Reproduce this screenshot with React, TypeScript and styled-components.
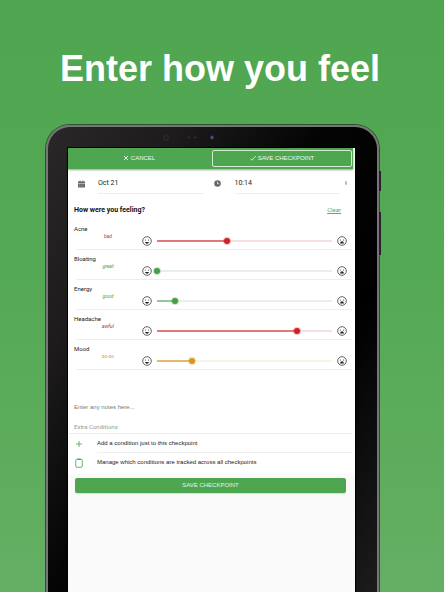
import React, { useState } from "react";
import styled, { createGlobalStyle } from "styled-components";

const Global = createGlobalStyle`
  *, *::before, *::after { box-sizing: border-box; }
  body { margin: 0; font-family: Roboto, "Liberation Sans", sans-serif; color: #222; }
  button, input, textarea { font: inherit; color: inherit; margin: 0; }
`;

const wide = `"Liberation Sans", Arial, sans-serif`;

const Page = styled.main`
  min-height: 100vh;
  display: flex;
  flex-direction: column;
  padding: 0 65px 0 46px;
  background: linear-gradient(#50a550 0%, #54a954 45%, #64af64 100%);
`;

const Header = styled.header`
  display: flex;
  justify-content: center;
  margin-right: -15px;
  padding-top: 49px;
`;

const Headline = styled.h1`
  margin: 0;
  font: bold 36px/40px ${wide};
  white-space: nowrap;
  color: #fff;
`;

const Tablet = styled.section`
  position: relative;
  flex: 1;
  display: flex;
  flex-direction: column;
  margin-top: 36px;
  padding: 0 22px 0 20px;
  border: 2px solid #77747a;
  border-bottom: 0;
  border-radius: 24px 24px 0 0;
  background: linear-gradient(120deg, #292728 0%, #1d1b1c 22%, #050505 45%, #000 70%, #1c1c1c 100%);
  box-shadow: 0 0 0 1px #285228;
`;

const SideButton = styled.span<{ $top: number; $height: number }>`
  position: absolute;
  right: -4px;
  top: ${(p) => p.$top}px;
  width: 2px;
  height: ${(p) => p.$height}px;
  background: #272129;
`;

const CameraBar = styled.div`
  height: 21px;
  display: flex;
  justify-content: center;
  align-items: center;
`;

const Screen = styled.div`
  flex: 1;
  display: flex;
  flex-direction: column;
  background: #fafafa;
  box-shadow: 0 0 0 1px #000;
`;

const Sheet = styled.div`
  background: #fff;
  padding-bottom: 2px;
`;

const TopBar = styled.div`
  display: grid;
  grid-template-columns: 1fr 1fr;
  height: 21px;
  margin-right: 2px;
  padding: 2px 1px 2px 0;
  background: #4ea650;
  box-shadow: 0 1px 2px #0006;
`;

const BarButton = styled.button<{ $outlined?: boolean }>`
  display: flex;
  align-items: center;
  justify-content: center;
  gap: 2px;
  padding: 0 0 1px;
  border: ${(p) => (p.$outlined ? "1px solid #d5ecd4" : "0")};
  border-radius: 2px;
  background: none;
  color: #eef8ee;
  font-family: ${wide};
  font-size: 6px;
  line-height: 8px;
  margin-left: ${(p) => (p.$outlined ? "2px" : "0")};
`;

const WhenRow = styled.div`
  display: grid;
  grid-template-columns: 30px 1fr 31px 1fr;
  align-items: center;
  padding: 4px 15px 0 0;
  color: #666;
`;

const IconCell = styled.label`
  display: flex;
  padding-left: 10px;
`;

const WhenField = styled.div`
  position: relative;
  display: flex;
  align-items: center;
  border-bottom: 1px solid #eee;
`;

const WhenInput = styled.input`
  flex: 1;
  min-width: 0;
  height: 20px;
  border: 0;
  padding: 0;
  background: none;
  outline: none;
  color: #222;
  font-size: 7px;
`;

const Caret = styled.span`
  position: absolute;
  right: -7px;
  width: 2px;
  height: 4px;
  border-radius: 1px;
  background: #bbb;
`;

const SectionHead = styled.div`
  display: flex;
  align-items: center;
  justify-content: space-between;
  padding: 11px 14px 5px 6px;
`;

const SectionTitle = styled.h2`
  margin: 0;
  font-size: 7px;
  line-height: 10px;
  font-weight: 700;
  color: #111;
`;

const ClearLink = styled.a`
  font-size: 6px;
  line-height: 10px;
  color: #5cae5e;
`;

const Condition = styled.div`
  display: grid;
  grid-template-columns: 66px 10px 1fr 10px;
  height: 30px;
  margin: 0 3px 0 8px;
  padding-right: 5px;
  border-bottom: 1px solid #eee;
`;

const Caption = styled.div`
  display: flex;
  flex-direction: column;
  margin-left: -2px;
  padding-top: 5px;
`;

const ConditionName = styled.label`
  font-size: 6px;
  line-height: 8px;
`;

const Rating = styled.output<{ $color: string }>`
  width: 68px;
  font-size: 5px;
  line-height: 7px;
  font-style: italic;
  text-align: center;
  color: ${(p) => p.$color};
`;

const FaceCell = styled.span`
  display: flex;
  padding-top: 16px;
`;

const Slider = styled.input<{ $color: string; $track: string; $fill: string }>`
  appearance: none;
  width: auto;
  min-width: 0;
  height: 8px;
  margin: 17px 2px 0;
  background: none;
  outline: none;
  &::-webkit-slider-runnable-track {
    height: 2px;
    background:
      linear-gradient(${(p) => p.$fill}, ${(p) => p.$fill}) 3px 0 / calc((100% - 6px) * var(--fill)) 100% no-repeat,
      linear-gradient(${(p) => p.$track}, ${(p) => p.$track}) 3px 0 / calc(100% - 6px) 100% no-repeat;
  }
  &::-webkit-slider-thumb {
    appearance: none;
    width: 6px;
    height: 6px;
    margin-top: -2px;
    border-radius: 50%;
    background: ${(p) => p.$color};
    box-shadow: 0 0 0 1px ${(p) => p.$color}44;
  }
`;

const Notes = styled.textarea`
  display: block;
  width: 100%;
  height: 53px;
  padding: 33px 6px 0 6px;
  border: 0;
  outline: none;
  resize: none;
  overflow: hidden;
  background: none;
  font-family: ${wide};
  font-size: 6px;
  line-height: 8px;
  &::placeholder { color: #777; }
`;

const ExtraTitle = styled.h3`
  margin: 0 3px 0 0;
  padding: 0 0 2px 6px;
  border-bottom: 1px solid #eee;
  font-size: 6px;
  line-height: 8px;
  font-weight: 400;
  color: #999;
`;

const Action = styled.button`
  display: grid;
  grid-template-columns: 22px 1fr;
  align-items: center;
  width: 100%;
  padding: 0 3px 0 7px;
  border: 0;
  background: none;
  text-align: left;
  color: #57ab62;
`;

const ActionText = styled.span<{ $last?: boolean }>`
  height: 19px;
  border-bottom: 1px solid ${(p) => (p.$last ? "transparent" : "#eee")};
  font-family: ${wide};
  font-size: 6px;
  line-height: 19px;
  color: #222;
`;

const SaveButton = styled.button`
  height: 15px;
  margin: 4px 9px 0 7px;
  padding: 0;
  border: 0;
  border-radius: 2px;
  background: #4ea650;
  box-shadow: 0 1px 1px #0002;
  color: #e6f5e5;
  font-family: ${wide};
  font-size: 6px;
  line-height: 15px;
`;

const Face = ({ sad = false }: { sad?: boolean }) => (
  <svg width="10" height="10" viewBox="0 0 20 20" fill="none" stroke="#444" strokeWidth="1.7" aria-hidden="true">
    <circle cx="10" cy="10" r="8.6" />
    <circle cx="6.9" cy="8" r="1.2" fill="#444" stroke="none" />
    <circle cx="13.1" cy="8" r="1.2" fill="#444" stroke="none" />
    {sad ? (
      <path d="M6 14.8Q7 10.6 10 10.6T14 14.8Z" fill="#222" stroke="none" />
    ) : (
      <path d="M6 12h8Q13 15.4 10 15.4T6 12Z" fill="#222" stroke="none" />
    )}
  </svg>
);

const Camera = () => (
  <svg width="100" height="10" viewBox="0 0 100 10" aria-hidden="true">
    <circle cx="4" cy="5" r="2.4" fill="none" stroke="#343235" strokeWidth=".8" />
    <circle cx="27" cy="4.5" r="1" fill="#39363b" />
    <circle cx="33" cy="4.5" r="1" fill="#39363b" />
    <circle cx="50" cy="4.5" r="2.3" fill="#24233c" />
    <circle cx="50" cy="4.5" r="1.2" fill="#605a9c" />
  </svg>
);

const palette = {
  red: { color: "#cf2027", fill: "#e4777a", track: "#f9e0e0" },
  green: { color: "#43a047", fill: "#93c995", track: "#e8efe8" },
  amber: { color: "#d8951f", fill: "#e4b96e", track: "#f9f3e4" },
};

type Tone = keyof typeof palette;

const conditions: { name: string; rating: string; value: number; tone: Tone }[] = [
  { name: "Acne", rating: "bad", value: 40, tone: "red" },
  { name: "Bloating", rating: "great", value: 0, tone: "green" },
  { name: "Energy", rating: "good", value: 10, tone: "green" },
  { name: "Headache", rating: "awful", value: 80, tone: "red" },
  { name: "Mood", rating: "so-so", value: 20, tone: "amber" },
];

function ConditionRow({ name, rating, value: initial, tone }: (typeof conditions)[number]) {
  const [value, setValue] = useState(initial);
  const p = palette[tone];
  const id = `condition-${name.toLowerCase()}`;
  return (
    <Condition>
      <Caption>
        <ConditionName htmlFor={id}>{name}</ConditionName>
        <Rating htmlFor={id} $color={p.color}>{rating}</Rating>
      </Caption>
      <FaceCell><Face /></FaceCell>
      <Slider
        id={id}
        type="range"
        min={0}
        max={100}
        value={value}
        onChange={(e) => setValue(Number(e.target.value))}
        $color={p.color}
        $fill={p.fill}
        $track={p.track}
        style={{ "--fill": value / 100 } as React.CSSProperties}
      />
      <FaceCell><Face sad /></FaceCell>
    </Condition>
  );
}

export default function App() {
  return (
    <Page>
      <Global />
      <Header>
        <Headline>Enter how you feel</Headline>
      </Header>
      <Tablet>
        <SideButton $top={44} $height={20} />
        <SideButton $top={85} $height={43} />
        <CameraBar><Camera /></CameraBar>
        <Screen>
          <Sheet>
            <TopBar>
              <BarButton type="button">
                <svg width="6" height="6" viewBox="0 0 12 12" stroke="currentColor" strokeWidth="1.8" aria-hidden="true">
                  <path d="M2 2l8 8M10 2l-8 8" />
                </svg>
                CANCEL
              </BarButton>
              <BarButton type="button" $outlined>
                <svg width="6" height="6" viewBox="0 0 12 12" fill="none" stroke="currentColor" strokeWidth="1.6" aria-hidden="true">
                  <path d="M0.5 7l3.5 3.5L11.5 2" />
                </svg>
                SAVE CHECKPOINT
              </BarButton>
            </TopBar>
            <WhenRow>
              <IconCell htmlFor="date" aria-label="Date">
                <svg width="7" height="8" viewBox="0 0 14 16" aria-hidden="true">
                  <path fill="#666" d="M3 1h2v2h4V1h2v2h3v3H0V3h3zM0 7h14v8H0z" />
                  <path stroke="#bbb" d="M2 9.5h10M2 12.5h10" strokeDasharray="2 1.5" />
                </svg>
              </IconCell>
              <WhenField><WhenInput id="date" aria-label="Date" defaultValue="Oct 21" /></WhenField>
              <IconCell htmlFor="time" aria-label="Time">
                <svg width="7" height="7" viewBox="0 0 14 14" aria-hidden="true">
                  <circle cx="7" cy="7" r="6.5" fill="#666" />
                  <path d="M7 3v4.5h3.5" fill="none" stroke="#fff" strokeWidth="1.4" />
                </svg>
              </IconCell>
              <WhenField><WhenInput id="time" aria-label="Time" defaultValue="10:14" /><Caret /></WhenField>
            </WhenRow>
            <SectionHead>
              <SectionTitle>How were you feeling?</SectionTitle>
              <ClearLink href="#clear">Clear</ClearLink>
            </SectionHead>
            {conditions.map((c) => <ConditionRow key={c.name} {...c} />)}
            <Notes aria-label="Notes" placeholder="Enter any notes here..." />
            <ExtraTitle>Extra Conditions</ExtraTitle>
            <Action type="button">
              <svg width="8" height="8" viewBox="0 0 16 16" stroke="currentColor" strokeWidth="1.8" aria-hidden="true">
                <path d="M8 2v12M2 8h12" />
              </svg>
              <ActionText>Add a condition just to this checkpoint</ActionText>
            </Action>
            <Action type="button">
              <svg width="8" height="10" viewBox="0 0 16 20" fill="none" stroke="currentColor" strokeWidth="1.8" aria-hidden="true">
                <rect x="1.5" y="2.5" width="13" height="16" rx="2.5" />
                <path d="M5 2.5h6" strokeWidth="3" />
              </svg>
              <ActionText $last>Manage which conditions are tracked across all checkpoints</ActionText>
            </Action>
          </Sheet>
          <SaveButton type="button">SAVE CHECKPOINT</SaveButton>
        </Screen>
      </Tablet>
    </Page>
  );
}
